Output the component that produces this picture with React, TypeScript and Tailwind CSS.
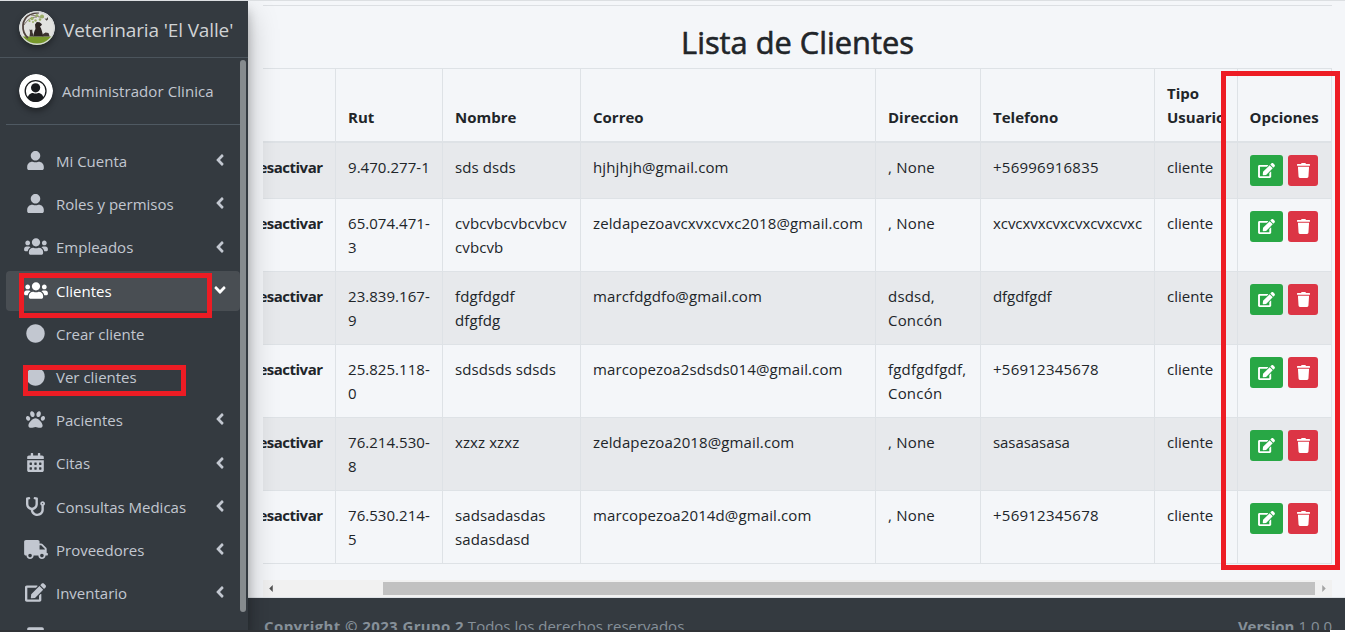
import React from "react";
import { FaUser, FaUsers, FaCircle, FaPaw, FaCalendarAlt, FaStethoscope, FaTruck, FaEdit, FaAngleLeft, FaAngleDown, FaTrash, FaSquare } from "react-icons/fa";
import type { IconType } from "react-icons";

type MenuItem = { label: string; icon: IconType; size: string; arrow?: boolean; active?: boolean; boxed?: boolean };

const narrow = "h-[19px] w-[17px]";
const square = "h-[19px] w-[19px]";
const wide = "h-[19px] w-[24px]";

const menu: MenuItem[] = [
  { label: "Mi Cuenta", icon: FaUser, size: narrow, arrow: true },
  { label: "Roles y permisos", icon: FaUser, size: narrow, arrow: true },
  { label: "Empleados", icon: FaUsers, size: wide, arrow: true },
  { label: "Clientes", icon: FaUsers, size: wide, arrow: true, active: true },
  { label: "Crear cliente", icon: FaCircle, size: square },
  { label: "Ver clientes", icon: FaCircle, size: square, boxed: true },
  { label: "Pacientes", icon: FaPaw, size: square, arrow: true },
  { label: "Citas", icon: FaCalendarAlt, size: narrow, arrow: true },
  { label: "Consultas Medicas", icon: FaStethoscope, size: square, arrow: true },
  { label: "Proveedores", icon: FaTruck, size: wide, arrow: true },
  { label: "Inventario", icon: FaEdit, size: "h-[19px] w-[21px]", arrow: true },
  { label: "", icon: FaSquare, size: square },
];

const headers = ["", "Rut", "Nombre", "Correo", "Direccion", "Telefono", "Tipo Usuario", "Opciones"];

const clients = [
  ["9.470.277-1", "sds dsds", "hjhjhjh@gmail.com", ", None", "+56996916835"],
  ["65.074.471-\n3", "cvbcvbcvbcvbcv\ncvbcvb", "zeldapezoavcxvxcvxc2018@gmail.com", ", None", "xcvcxvxcvxcvxcvxcvxc"],
  ["23.839.167-\n9", "fdgfdgdf\ndfgfdg", "marcfdgdfo@gmail.com", "dsdsd,\nConcón", "dfgdfgdf"],
  ["25.825.118-\n0", "sdsdsds sdsds", "marcopezoa2sdsds014@gmail.com", "fgdfgdfgdf,\nConcón", "+56912345678"],
  ["76.214.530-\n8", "xzxz xzxz", "zeldapezoa2018@gmail.com", ", None", "sasasasasa"],
  ["76.530.214-\n5", "sadsadasdas\nsadasdasd", "marcopezoa2014d@gmail.com", ", None", "+56912345678"],
];

const gridCols = "grid grid-cols-[73px_107px_138px_295px_105px_174px_83px_94px]";
const cell = "border-r border-[#dee2e6] px-3 whitespace-pre";
const tracking = ["tracking-[0.05px]", "tracking-[0.1px]", "tracking-[0.12px]", "tracking-[0.2px]", "tracking-[-0.06px]"];

function Logo() {
  return (
    <svg viewBox="0 0 36 34" className="h-[34px] w-9 shrink-0 rounded-full shadow-[0_3px_6px_rgba(0,0,0,0.35)]">
      <clipPath id="logo"><ellipse cx="18" cy="17" rx="18" ry="17" /></clipPath>
      <g clipPath="url(#logo)">
        <rect width="36" height="34" fill="#e1e2df" />
        <rect y="25.5" width="36" height="9" fill="#77982b" />
        <path d="M9 27C1.500 20 2.500 8 11 3.500c3-1.500 5-2 9-2" fill="none" stroke="#50443f" strokeWidth="1.8" />
        <path d="M5 14c3-5 7-8 13-8M12 4c5 0 7 3 13 2" fill="none" stroke="#66594d" strokeWidth=".8" />
        <g fill="#9aae67">
          <circle cx="13" cy="7.500" r="1.700" /><circle cx="18" cy="4.500" r="1.500" /><circle cx="23" cy="5.500" r="2" />
          <circle cx="10.500" cy="10" r="1.100" /><circle cx="16.500" cy="9.500" r="1.200" /><circle cx="21" cy="8.500" r="1.300" /><circle cx="14" cy="11" r="1" />
        </g>
        <path d="M14.500 25.500c0-3 .8-5.500 2-7.500l-.5-4.500 1.800-2.500 2.800.2 2.400 2-.8 1.500-1.200.7c1.600 2.500 2.400 6 3.400 10.100z" fill="#2c2422" />
        <path d="M10.500 25.500l.5-4-.5-3.200 1.300.8 1.400-.6.3 3 1.500 4z" fill="#3d3431" />
        <path d="M23.500 25.500l.5-2.500 2.500-1.500 3 .6 1.200 3.400z" fill="#3d3431" />
        <path d="M25.500 7.500l2 .3 1.300-1.800.3 2.200-1.500 1.500z" fill="#4b4642" />
        <ellipse cx="18" cy="17" rx="17.3" ry="16.3" fill="none" stroke="#d4d7d8" strokeWidth="1.4" />
      </g>
    </svg>
  );
}

function Avatar() {
  return (
    <svg viewBox="0 0 34 34" className="size-[34px] shrink-0 rounded-full shadow-[0_3px_6px_rgba(0,0,0,0.4)]">
      <circle cx="17" cy="17" r="17" fill="#fff" />
      <circle cx="16.6" cy="17" r="10.4" fill="#fff" stroke="#191b1e" strokeWidth="1.300" />
      <circle cx="16.6" cy="13.800" r="4.600" fill="#191b1e" />
      <path d="M8.700 24c.6-3.600 3-5 5.400-5 1.500.8 3.500.8 5 0 2.500 0 4.800 1.400 5.400 5-4 5.300-11.800 5.300-15.800 0z" fill="#191b1e" />
    </svg>
  );
}

function Sidebar() {
  return (
    <aside className="relative z-10 flex h-[630px] w-[248px] shrink-0 flex-col bg-[#343a40] text-[#c2c7d0] shadow-[0_14px_28px_rgba(0,0,0,0.25),0_10px_10px_rgba(0,0,0,0.22)]">
      <div className="flex h-[57px] shrink-0 items-center border-b border-[#4b545c] pb-[3px] pl-[19px]">
        <Logo />
        <span className="mt-[5px] ml-[8px] text-[19px] tracking-[-0.13px] whitespace-nowrap text-[#d0d3d5]">Veterinaria 'El Valle'</span>
      </div>
      <div className="flex h-[573px] justify-between">
        <div className="ml-[6px] flex h-full w-[234px] shrink-0 flex-col overflow-hidden">
          <div className="flex h-[67px] shrink-0 items-center border-b border-[#4f5962] pl-[12.5px]">
            <Avatar />
            <span className="ml-[9.5px] text-[15px] tracking-[0.08px] whitespace-nowrap">Administrador Clinica</span>
          </div>
          <nav className="mt-[16.3px] flex flex-col gap-[3.2px]">
            {menu.map((m, i) => (
              <div key={i} className={m.active ? "relative flex h-10 shrink-0 items-center rounded bg-[#494e53] text-white" : "relative flex h-10 shrink-0 items-center"}>
                <span className="ml-[17.4px] flex w-[25px] justify-center pb-[1.6px]"><m.icon className={"shrink-0 " + m.size} /></span>
                <span className="ml-[7.6px] grow text-[15px] whitespace-nowrap">{m.label}</span>
                {m.arrow && (m.active
                  ? <FaAngleDown className="mr-[11px] mb-[2px] size-[18px]" />
                  : <FaAngleLeft className="mr-[11px] mb-[2px] size-[18px]" />)}
                {m.active && <span className="absolute top-[2px] left-[13px] h-[45px] w-[193px] border-5 border-[#ed1c24]" />}
                {m.boxed && <span className="absolute top-[8px] left-[17px] h-[31px] w-[163px] border-5 border-[#ed1c24]" />}
              </div>
            ))}
          </nav>
        </div>
        <div className="mt-[2px] mr-[2px] h-[552px] w-[6px] rounded-full bg-[#868b8e]" />
      </div>
    </aside>
  );
}

function ClientTable() {
  return (
    <div className="relative w-[1069px] border-t border-[#dee2e6] text-[15px] leading-6">
      <div className={gridCols + " h-[74px] border-b-2 border-[#dee2e6] font-bold"}>
        {headers.map((h, i) => (
          <div key={i} className={"flex items-end border-r border-[#dee2e6] pb-3 " + (i === 7 ? "pl-[11.5px]" : "px-3")}>{h}</div>
        ))}
      </div>
      {clients.map((c, i) => (
        <div key={i} className={gridCols + (i === 0 ? " h-14" : " h-[73px]") + " border-b border-[#dee2e6]" + (i % 2 === 0 ? " bg-black/5" : "")}>
          <div className="flex justify-end overflow-hidden border-r border-[#dee2e6] pt-3 pr-[12.5px] font-bold tracking-[-0.5px]">Desactivar</div>
          {c.map((t, j) => (
            <div key={j} className={cell + " pt-3 " + (t.startsWith("+") ? "tracking-[0.24px]" : tracking[j])}>{t}</div>
          ))}
          <div className={cell + " pt-3"}>cliente</div>
          <div className="flex items-start gap-[5px] border-r border-[#dee2e6] pt-3 pl-3 text-white">
            <button className="flex h-[31px] w-[33px] items-center justify-center rounded-[3px] bg-[#28a745]"><FaEdit className="h-[15px] w-[17px]" /></button>
            <button className="flex h-[31px] w-[30px] items-center justify-center rounded-[3px] bg-[#dc3545]"><FaTrash className="h-[15px] w-[13px]" /></button>
          </div>
        </div>
      ))}
      <div className="absolute top-[2px] left-[958px] h-[499px] w-[119px] border-5 border-[#ed1c24]" />
    </div>
  );
}

export default function App() {
  return (
    <div className="flex h-[632px] w-[1345px] flex-col overflow-hidden border-t border-[#dcdfe2] bg-[#f4f6f9] font-['Open_Sans','Noto_Sans',sans-serif] text-[#212529]">
      <div className="flex h-[629px] shrink-0 overflow-hidden">
        <Sidebar />
        <div className="flex min-w-0 grow flex-col">
          <main className="flex h-[596px] shrink-0 flex-col pl-[15px]">
            <div className="mt-1 flex h-[63px] w-[1069px] shrink-0 items-center justify-center border-t border-[#dcdfe3] pt-[9px]">
              <h1 className="text-[30.8px] leading-[38px] [-webkit-text-stroke:0.6px_#212529]">Lista de Clientes</h1>
            </div>
            <ClientTable />
            <div className="mt-4 flex h-[17px] w-[1069px] items-center bg-[#f1f1f1] px-[6px]">
              <svg viewBox="0 0 4 8" className="h-[7px] w-1 shrink-0"><path d="M4 0v8L0 4z" fill="#505050" /></svg>
              <div className="ml-[110px] h-[13px] w-[932px] shrink-0 bg-[#c1c1c1]" />
              <svg viewBox="0 0 4 8" className="ml-[7px] h-[7px] w-1 shrink-0"><path d="M0 0v8l4-4z" fill="#a3a3a3" /></svg>
            </div>
          </main>
          <footer className="flex h-[33px] shrink-0 justify-between overflow-hidden border-t border-[#dee2e6] bg-[#343a40] pt-[16px] pr-[13px] pl-4 text-[15px] leading-6 text-[#869099]">
            <span><b className="tracking-[0.4px]">Copyright © 2023 Grupo 2</b> Todos los derechos reservados.</span>
            <span><b>Version</b> 1.0.0</span>
          </footer>
        </div>
      </div>
      <div className="flex h-[2px] shrink-0 justify-end bg-[#303236]"><div className="w-[15px] bg-white" /></div>
    </div>
  );
}
